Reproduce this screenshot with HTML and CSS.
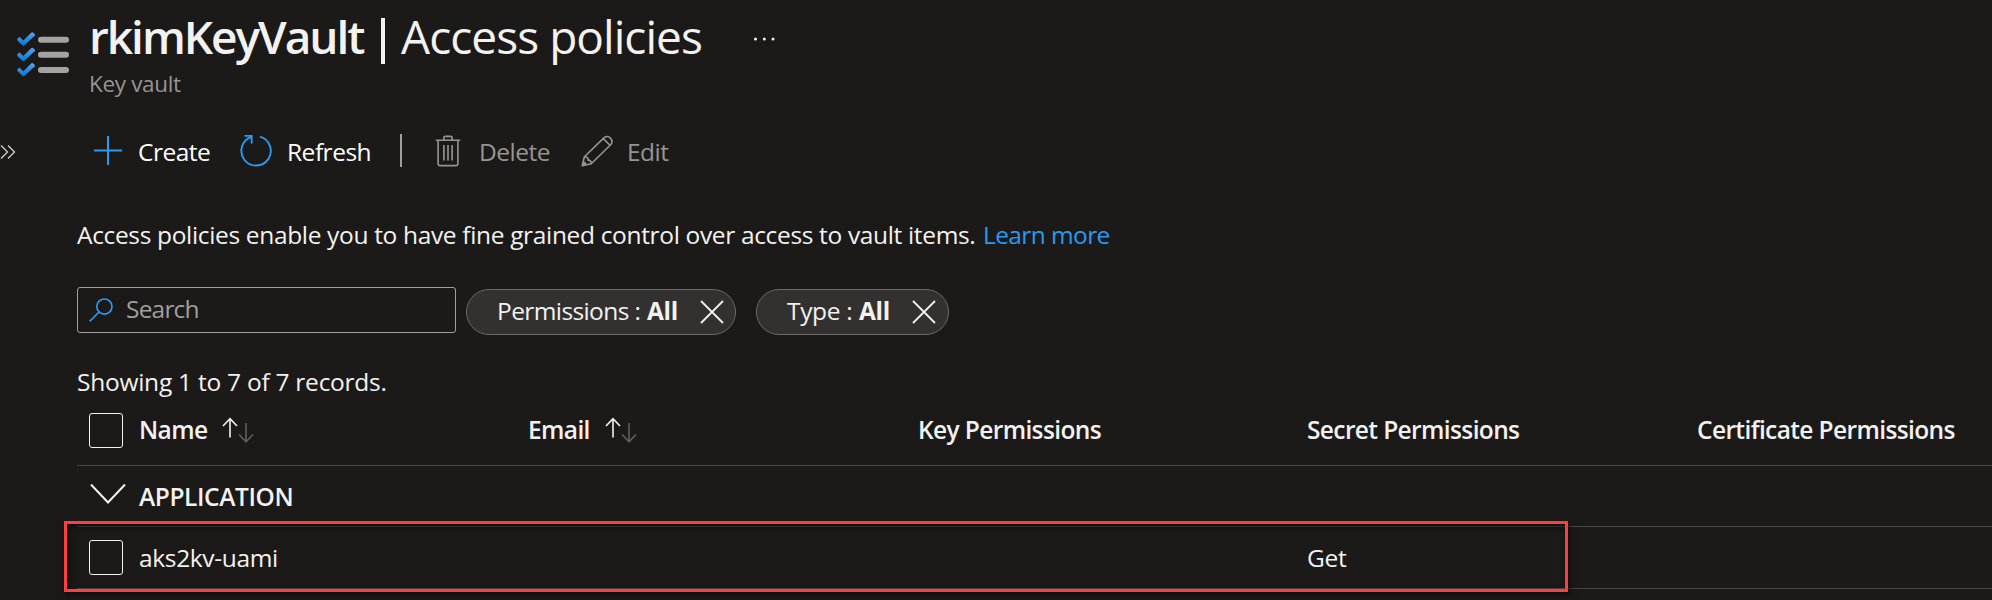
FILE: index.html
```html
<!DOCTYPE html>
<html lang="en">
<head>
    <meta charset="UTF-8">
    <meta name="viewport" content="width=device-width, initial-scale=1.0">
    <title>rkimKeyVault | Access policies</title>
    <link rel="stylesheet" href="styles.css">
</head>
<body>
    <header class="header">
        <svg class="header-icon" width="54" height="48" viewBox="0 0 54 48">
            <defs>
                <linearGradient id="check" x1="0" y1="1" x2="0" y2="0">
                    <stop offset="0" stop-color="#0078d4"/>
                    <stop offset="1" stop-color="#5ea0ef"/>
                </linearGradient>
            </defs>
            <path id="tick" d="M1.6 7.6 L3.4 5.8 L7.4 9.5 L15.4 1.6 Q16.4 .9 17.3 1.8 L18.9 3.3 Q19.4 4 18.7 4.8 L8.2 14.4 Q7.4 15.1 6.6 14.4 L1.4 9.4 Q.7 8.5 1.6 7.6 Z" fill="url(#check)"/>
            <use href="#tick" y="15.5"/>
            <use href="#tick" y="30.7"/>
            <rect x="22" y="5.8" width="31" height="6" rx="3" fill="#a3a3a3"/>
            <rect x="22" y="20.7" width="31" height="6" rx="3" fill="#a3a3a3"/>
            <rect x="22" y="36" width="31" height="6" rx="3" fill="#a3a3a3"/>
        </svg>
        <div class="header-text">
            <div class="title-row">
                <h1 class="title"><span class="title-name">rkimKeyVault</span><span class="title-divider"></span><span class="title-page">Access policies</span></h1>
                <svg class="more" width="22" height="6" viewBox="0 0 22 6" fill="#f3f2f1">
                    <circle cx="2.5" cy="3" r="1.5"/>
                    <circle cx="11.3" cy="3" r="1.5"/>
                    <circle cx="20" cy="3" r="1.5"/>
                </svg>
            </div>
            <div class="subtitle">Key vault</div>
        </div>
    </header>

    <div class="toolbar">
        <svg class="expand" width="17" height="16" viewBox="0 0 17 16" fill="none" stroke="#d2d0ce" stroke-width="1.3">
            <path d="M1 1.5 L7.5 8 L1 14.5 M8 1.5 L14.5 8 L8 14.5"/>
        </svg>
        <button class="command create">
            <svg width="30" height="32" viewBox="0 0 30 32" fill="none" stroke="#2899f5" stroke-width="2">
                <path d="M15 1 V30 M1 15.5 H29"/>
            </svg>
            <span>Create</span>
        </button>
        <button class="command refresh">
            <svg width="32" height="32" viewBox="0 0 32 32" fill="none" stroke="#2899f5" stroke-width="1.9">
                <path d="M20 1.7 A14.7 14.7 0 1 1 11.5 1.9 M4.5 .9 H11.7 V8.4"/>
            </svg>
            <span>Refresh</span>
        </button>
        <div class="separator"></div>
        <button class="command delete" disabled>
            <svg width="26" height="32" viewBox="0 0 26 32" fill="none" stroke="#979593" stroke-width="1.6">
                <path d="M.8 5.2 H25.2 M8.8 5 V2.9 Q8.8 1.4 10.3 1.4 H15.7 Q17.2 1.4 17.2 2.9 V5 M3.1 5.2 V28.6 Q3.1 30.6 5.1 30.6 H20.9 Q22.9 30.6 22.9 28.6 V5.2"/>
                <path d="M8.9 10 V25.5 M13 10 V25.5 M17.1 10 V25.5"/>
            </svg>
            <span>Delete</span>
        </button>
        <button class="command edit" disabled>
            <svg width="32" height="32" viewBox="0 0 32 32" fill="none" stroke="#979593" stroke-width="1.6" stroke-linejoin="round">
                <path d="M1.2 30.8 L3.4 21.8 L23.1 2.6 A4.9 4.9 0 0 1 29.9 9.5 L10.2 28.7 Z M3.4 21.8 C6.2 21.8 7.3 23 7.1 25.1 C9.2 25 10.4 26.2 10.2 28.7 M22.3 3.6 L29 10.3 M1.2 30.8 L3.7 27.5 L5 29.5 Z"/>
            </svg>
            <span>Edit</span>
        </button>
    </div>

    <main class="content">
        <p class="description"><span class="description-text">Access policies enable you to have fine grained control over access to vault items.</span> <a class="link" href="#">Learn more</a></p>

        <div class="filters">
            <div class="search">
                <svg width="24" height="24" viewBox="0 0 24 24" fill="none" stroke="#2899f5" stroke-width="1.7">
                    <circle cx="15.4" cy="8.6" r="7.6"/>
                    <path d="M10 14 L.7 23.3"/>
                </svg>
                <span class="placeholder">Search</span>
            </div>
            <div class="pill pill-permissions">
                <span class="pill-label">Permissions :</span><b class="pill-value">All</b>
                <svg width="24" height="24" viewBox="0 0 24 24" stroke="#f3f2f1" stroke-width="1.8"><path d="M1 1 L23 23 M23 1 L1 23"/></svg>
            </div>
            <div class="pill pill-type">
                <span class="pill-label">Type :</span><b class="pill-value">All</b>
                <svg width="24" height="24" viewBox="0 0 24 24" stroke="#f3f2f1" stroke-width="1.8"><path d="M1 1 L23 23 M23 1 L1 23"/></svg>
            </div>
        </div>

        <p class="count">Showing 1 to 7 of 7 records.</p>

        <div class="table">
            <div class="row row-head">
                <span class="checkbox"></span>
                <div class="cell col-name">Name
                    <svg class="sort" width="32" height="26" viewBox="0 0 32 26" fill="none" stroke-width="1.6">
                        <path stroke="#f3f2f1" d="M8 20.5 V1.5 M1 9 L8 1.7 L15 9"/>
                        <path stroke="#605e5c" d="M24 6 V25 M17 17.5 L24 24.8 L31 17.5"/>
                    </svg>
                </div>
                <div class="cell col-email">Email
                    <svg class="sort" width="32" height="26" viewBox="0 0 32 26" fill="none" stroke-width="1.6">
                        <path stroke="#f3f2f1" d="M8 20.5 V1.5 M1 9 L8 1.7 L15 9"/>
                        <path stroke="#605e5c" d="M24 6 V25 M17 17.5 L24 24.8 L31 17.5"/>
                    </svg>
                </div>
                <div class="cell">Key Permissions</div>
                <div class="cell">Secret Permissions</div>
                <div class="cell">Certificate Permissions</div>
            </div>
            <div class="row row-group">
                <svg class="chevron" width="36" height="22" viewBox="0 0 36 22" fill="none" stroke="#f3f2f1" stroke-width="2">
                    <path d="M1 1.5 L18 19.5 L35 1.5"/>
                </svg>
                <div class="cell group-name">APPLICATION</div>
            </div>
            <div class="row row-item">
                <span class="checkbox"></span>
                <div class="cell">aks2kv-uami</div>
                <div class="cell"></div>
                <div class="cell"></div>
                <div class="cell">Get</div>
                <div class="cell"></div>
                <div class="highlight"></div>
            </div>
        </div>
    </main>
</body>
</html>
```
FILE: styles.css
```css
* {
    box-sizing: border-box;
}
body {
    margin: 0;
    height: 600px;
    overflow: hidden;
    background: #1b1a19;
    color: #f3f2f1;
    font-family: "Open Sans", "Noto Sans", sans-serif;
    font-size: 24.5px;
    line-height: 34px;
    letter-spacing: -0.34px;
    white-space: nowrap;
}
svg {
    display: block;
    flex: none;
}
p {
    margin: 0;
}

/* header */
.header {
    display: flex;
    height: 132px;
    padding: 6px 0 0 16px;
}
.header-icon {
    margin-top: 25px;
}
.header-text {
    margin-left: 19px;
}
.title-row {
    display: flex;
    align-items: center;
}
.title {
    display: flex;
    align-items: center;
    margin: 0;
    font-size: 46px;
    line-height: 60px;
    font-weight: 400;
}
.title-name {
    width: 292px;
    font-weight: 600;
    letter-spacing: -2.05px;
}
.title-divider {
    width: 4px;
    height: 46px;
    margin-top: 9px;
    background: #f3f2f1;
}
.title-page {
    margin-left: 16px;
    width: 301px;
    letter-spacing: -0.95px;
}
.more {
    margin: 6px 0 0 51px;
}
.subtitle {
    margin-top: 3px;
    font-size: 22.5px;
    line-height: 30px;
    color: #979593;
}

/* command bar */
.toolbar {
    display: flex;
    align-items: center;
    height: 40px;
}
.expand {
    width: 17px;
}
.command {
    display: flex;
    align-items: center;
    padding: 0;
    border: none;
    background: none;
    color: #fff;
    font: inherit;
    letter-spacing: -0.5px;
}
.command svg {
    margin-bottom: 3px;
}
.command:disabled {
    color: #979593;
}
.create {
    width: 147px;
    margin-left: 76px;
    gap: 15px;
}
.refresh {
    width: 160px;
    gap: 15px;
}
.separator {
    width: 2px;
    height: 33px;
    margin-bottom: 3px;
    background: #a19f9d;
}
.delete {
    width: 146px;
    margin-left: 33px;
    gap: 18px;
}
.edit {
    gap: 14px;
}

/* content */
.content {
    padding: 46px 0 0 77px;
}
.description {
    display: flex;
}
.description-text {
    width: 906px;
}
.link {
    color: #2899f5;
    text-decoration: none;
    letter-spacing: -0.6px;
}
.filters {
    display: flex;
    align-items: flex-start;
    margin-top: 35px;
}
.search {
    display: flex;
    align-items: center;
    width: 379px;
    height: 46px;
    padding-left: 11px;
    border: 1px solid #a19f9d;
    border-radius: 3px;
}
.placeholder {
    margin: 0 0 3px 13px;
    color: #a19f9d;
    letter-spacing: -0.8px;
}
.pill {
    display: flex;
    align-items: center;
    height: 46px;
    margin: 2px 0 0 10px;
    padding-left: 30px;
    border: 1px solid #6b6967;
    border-radius: 23px;
    background: #323130;
}
.pill-label,
.pill-value {
    margin-bottom: 2px;
}
.pill-value {
    width: 53px;
    font-weight: 700;
}
.pill-permissions {
    width: 270px;
}
.pill-permissions .pill-label {
    width: 150px;
    letter-spacing: -0.6px;
}
.pill-type {
    width: 193px;
    margin-left: 20px;
}
.pill-type .pill-label {
    width: 72px;
}
.count {
    margin-top: 31px;
    line-height: 32px;
    letter-spacing: -0.25px;
}

/* table */
.table {
    margin-top: -1px;
}
.row {
    display: grid;
    grid-template-columns: 50px 389px 390px 389px 390px 1fr;
    align-items: center;
    padding-left: 12px;
    border-bottom: 1px solid #484644;
}
.checkbox {
    width: 34px;
    height: 35px;
    border: 1px solid #f3f2f1;
    border-radius: 3px;
}
.row-head {
    height: 69px;
}
.row-head .checkbox {
    margin-bottom: 1px;
}
.row-head .cell {
    display: flex;
    align-items: center;
    margin-bottom: 3px;
    font-weight: 600;
    letter-spacing: -0.62px;
}
.sort {
    margin-left: 15px;
}
.row-group {
    height: 61px;
}
.group-name {
    margin-top: 2px;
    font-weight: 600;
    letter-spacing: -0.4px;
}
.chevron {
    margin: 0 0 5px 1px;
}
.row-item {
    position: relative;
    height: 62px;
}
.row-item .cell {
    margin-top: 1px;
}
/* callout frame drawn over the row */
.highlight {
    position: absolute;
    left: -13px;
    top: -6px;
    width: 1504px;
    height: 71px;
    border: 3px solid #ff3e3e;
    box-shadow: 2px 3px 6px rgba(0, 0, 0, 0.5), inset 2px 3px 6px rgba(0, 0, 0, 0.5);
}
```
